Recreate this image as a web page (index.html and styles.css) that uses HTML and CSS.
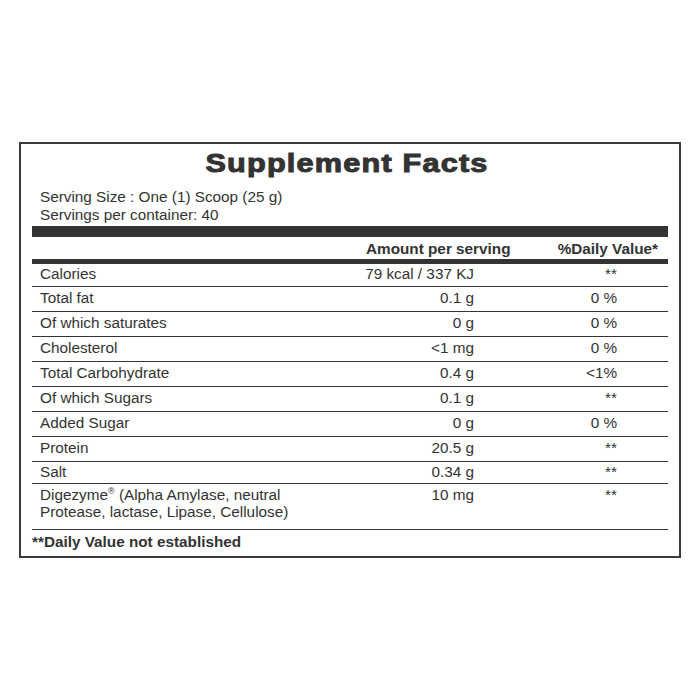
FILE: index.html
```html
<!DOCTYPE html>
<html lang="en">
<head>
    <meta charset="UTF-8">
    <meta name="viewport" content="width=device-width, initial-scale=1.0">
    <title>Supplement Facts</title>
    <link rel="stylesheet" href="styles.css">
</head>
<body>
    <div class="panel">
        <h1 class="title">Supplement Facts</h1>
        <div class="serving">
            <p>Serving Size : One (1) Scoop (25 g)</p>
            <p>Servings per container: 40</p>
        </div>

        <div class="bar-thick"></div>
        <div class="row head">
            <div></div>
            <div class="amount">Amount per serving</div>
            <div class="dv">%Daily Value*</div>
        </div>

        <div class="row first">
            <div class="label">Calories</div>
            <div class="amount">79 kcal / 337 KJ</div>
            <div class="dv">**</div>
        </div>
        <div class="row">
            <div class="label">Total fat</div>
            <div class="amount">0.1 g</div>
            <div class="dv">0 %</div>
        </div>
        <div class="row">
            <div class="label">Of which saturates</div>
            <div class="amount">0 g</div>
            <div class="dv">0 %</div>
        </div>
        <div class="row">
            <div class="label">Cholesterol</div>
            <div class="amount">&lt;1 mg</div>
            <div class="dv">0 %</div>
        </div>
        <div class="row">
            <div class="label">Total Carbohydrate</div>
            <div class="amount">0.4 g</div>
            <div class="dv">&lt;1%</div>
        </div>
        <div class="row">
            <div class="label">Of which Sugars</div>
            <div class="amount">0.1 g</div>
            <div class="dv">**</div>
        </div>
        <div class="row">
            <div class="label">Added Sugar</div>
            <div class="amount">0 g</div>
            <div class="dv">0 %</div>
        </div>
        <div class="row">
            <div class="label">Protein</div>
            <div class="amount">20.5 g</div>
            <div class="dv">**</div>
        </div>
        <div class="row short">
            <div class="label">Salt</div>
            <div class="amount">0.34 g</div>
            <div class="dv">**</div>
        </div>
        <div class="row tall">
            <div class="label">Digezyme<sup>®</sup> (Alpha Amylase, neutral<br>Protease, lactase, Lipase, Cellulose)</div>
            <div class="amount">10 mg</div>
            <div class="dv">**</div>
        </div>

        <p class="note">**Daily Value not established</p>
    </div>
</body>
</html>
```

FILE: styles.css
```css
body {
    margin: 0;
    font-family: "Liberation Sans", Arial, sans-serif;
    color: #333;
    background: #fff;
}
.panel {
    box-sizing: border-box;
    width: 662px;
    margin: 142px 0 0 19px;
    padding: 0 11px 0;
    border: 2px solid #3a3a3a;
}
.title {
    margin: 4px 0 10px;
    font-size: 26px;
    line-height: 30px;
    font-weight: bold;
    text-align: center;
    letter-spacing: 1px;
    color: #333;
    -webkit-text-stroke: 1px #333;
    transform: translateX(-3px) scaleX(1.18);
}
.serving p {
    margin: 0;
    padding-left: 8px;
    font-size: 15.3px;
    line-height: 18px;
}
.bar-thick {
    height: 11px;
    margin-top: 2px;
    background: #333;
}
.row {
    display: grid;
    grid-template-columns: 1fr 180px 160px;
    padding: 2px 0 4px;
    font-size: 15.3px;
    line-height: 18px;
    border-bottom: 1px solid #333;
}
.row .label {
    padding-left: 8px;
}
.row .amount {
    text-align: right;
    padding-right: 34px;
}
.row .dv {
    text-align: right;
    padding-right: 51px;
}
.head {
    padding: 3px 0 1px;
    font-weight: bold;
    border-bottom: 5px solid #333;
}
.head .amount {
    text-align: left;
    padding: 0 0 0 38px;
    white-space: nowrap;
}
.head .dv {
    padding-right: 10px;
}
.row.first {
    padding: 1px 0 3px;
}
.row.short {
    padding: 1px 0 2px;
}
.row.tall {
    padding: 2px 0 9px;
    line-height: 17px;
}
.row sup {
    font-size: 9px;
    line-height: 0;
}
.note {
    margin: 0;
    padding: 3px 0 5px;
    font-size: 15.3px;
    line-height: 18px;
    font-weight: bold;
}
```
